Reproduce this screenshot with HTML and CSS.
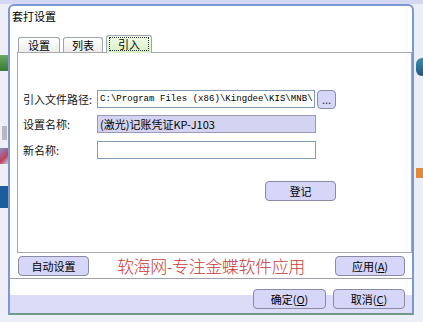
FILE: index.html
```html
<!DOCTYPE html>
<html lang="zh-CN">
<head>
    <meta charset="UTF-8">
    <title>套打设置</title>
    <link rel="stylesheet" href="styles.css">
</head>
<body>
    <div class="desk">
        <div class="side side-left">
            <span class="blot blot-green"></span>
            <span class="blot blot-grey"></span>
            <span class="blot blot-pen"></span>
            <span class="blot blot-blue"></span>
        </div>

        <div class="dialog">
            <div class="title">套打设置</div>

            <div class="tabs">
                <span class="tab">设置</span>
                <span class="tab">列表</span>
                <span class="tab active"><span class="focus">引入</span></span>
            </div>

            <div class="panel">
                <div class="row">
                    <label>引入文件路径:</label>
                    <div class="field path">C:\Program Files (x86)\Kingdee\KIS\MNB\</div>
                    <button class="btn dots">...</button>
                </div>
                <div class="row">
                    <label>设置名称:</label>
                    <div class="field locked">(激光)记账凭证KP-J103</div>
                </div>
                <div class="row row-new">
                    <label>新名称:</label>
                    <div class="field"></div>
                </div>
                <div class="reg-row">
                    <button class="btn btn-reg">登记</button>
                </div>
            </div>

            <div class="action-row">
                <button class="btn btn-auto">自动设置</button>
                <span class="brand">软海网-专注金蝶软件应用</span>
                <button class="btn btn-apply">应用(<u>A</u>)</button>
            </div>

            <div class="footer">
                <button class="btn btn-ok">确定(<u>O</u>)</button>
                <button class="btn btn-cancel">取消(<u>C</u>)</button>
            </div>
        </div>

        <div class="side side-right">
            <span class="blot blot-swirl"></span>
            <span class="blot blot-orange"></span>
        </div>
    </div>
</body>
</html>
```

FILE: styles.css
```css
body {
    margin: 0;
    width: 423px;
    height: 322px;
    overflow: hidden;
    background: #eceef8;
    font-family: "Noto Sans CJK SC", "Noto Sans", sans-serif;
    font-size: 11px;
    color: #000;
}

.desk {
    display: flex;
    height: 322px;
    background: linear-gradient(#d4d8f2 0, #d4d8f2 4px, #eceef8 4px);
}

.side {
    display: flex;
    flex-direction: column;
}

.side-left {
    width: 8px;
}

.side-right {
    width: 9px;
}

.blot {
    display: block;
}

.blot-green {
    margin-top: 55px;
    height: 16px;
    background: linear-gradient(#6aa860, #3b7a34);
}

.blot-grey {
    margin-top: 55px;
    height: 14px;
    margin-left: 2px;
    width: 5px;
    background: #b8b8c0;
}

.blot-pen {
    margin-top: 8px;
    height: 16px;
    background: linear-gradient(135deg, #8090c0, #c04060 60%, #d0d0e0);
}

.blot-blue {
    margin-top: 22px;
    height: 22px;
    background: #1c5e9c;
}

.blot-swirl {
    margin-top: 58px;
    height: 18px;
    margin-left: 2px;
    background: linear-gradient(#3c8cb0, #205a80);
    border-radius: 6px 0 0 6px;
}

.blot-orange {
    margin-top: 92px;
    height: 10px;
    margin-left: 2px;
    background: #e08a3a;
}

/* dialog window */
.dialog {
    margin-top: 4px;
    width: 402px;
    height: 307px;
    border: 2px solid #7c98d4;
    border-bottom-color: #6e9c88;
    border-radius: 6px 6px 0 0;
    background: #fff;
    display: flex;
    flex-direction: column;
}

.title {
    height: 20px;
    line-height: 20px;
    padding-left: 2px;
}

.tabs {
    display: flex;
    align-items: flex-end;
    gap: 3px;
    height: 16px;
    margin-top: 10px;
    margin-left: 8px;
}

.tab {
    height: 14px;
    line-height: 14px;
    padding: 0 9px;
    border: 1px solid #9ca4b0;
    border-bottom: none;
    border-radius: 3px 3px 0 0;
    background: linear-gradient(#ffffff, #ececea);
    text-align: center;
}

.tab:nth-child(2) {
    padding: 0 8px;
}

.tab.active {
    height: 16px;
    padding: 1px 2px 0;
    margin-bottom: -1px;
    background: linear-gradient(#f2fbe8, #d6efc6);
    position: relative;
}

.focus {
    display: block;
    height: 12px;
    line-height: 12px;
    padding: 0 8px;
    border: 1px dotted #303030;
}

.panel {
    margin-left: 7px;
    width: 388px;
    height: 199px;
    border: 1px solid #a8a8a8;
    padding-left: 5px;
    box-sizing: content-box;
}

.row {
    display: flex;
    align-items: center;
    height: 18px;
    margin-top: 7px;
}

.row:first-child {
    margin-top: 37px;
}

.row-new {
    margin-top: 8px;
}

.row label {
    width: 74px;
    color: #111;
}

.field {
    width: 215px;
    height: 16px;
    line-height: 16px;
    border: 1px solid #7f9db9;
    background: #fff;
    padding-left: 2px;
    box-sizing: content-box;
    overflow: hidden;
    white-space: nowrap;
}

.field.path {
    width: 214px;
    font-family: "Liberation Mono", monospace;
    font-size: 9px;
    letter-spacing: 0.05px;
}

.field.locked {
    background: #d4d4f2;
    border-color: #9a9ab8;
}

.btn {
    font-family: inherit;
    font-size: 11px;
    color: #000;
    background: #d6d6f8;
    border: 1px solid #8a8aa4;
    border-radius: 4px;
    padding: 0;
    height: 20px;
    line-height: 17px;
}

.btn u {
    text-decoration: underline;
}

.dots {
    width: 19px;
    height: 19px;
    margin-left: 2px;
    line-height: 14px;
    color: #334;
}

.reg-row {
    display: flex;
    margin-top: 22px;
    padding-left: 242px;
}

.btn-reg {
    width: 71px;
}

.action-row {
    display: flex;
    align-items: center;
    height: 20px;
    margin-top: 3px;
    padding: 0 7px 0 8px;
}

.btn-auto {
    width: 71px;
}

.brand {
    margin-left: 28px;
    font-size: 17px;
    font-weight: 300;
    color: #cc3a3a;
    letter-spacing: -0.4px;
    line-height: 20px;
}

.btn-apply {
    margin-left: auto;
    width: 70px;
}

.footer {
    margin-top: 2px;
    flex: 1;
    border-top: 1px solid #a0a0a8;
    display: flex;
    justify-content: flex-end;
    align-items: flex-start;
    gap: 7px;
    padding: 10px 7px 0 0;
    background: linear-gradient(#fff 0, #fff 16px, #dcdcf8 16px);
}

.btn-ok {
    width: 73px;
}

.btn-cancel {
    width: 72px;
}
```
